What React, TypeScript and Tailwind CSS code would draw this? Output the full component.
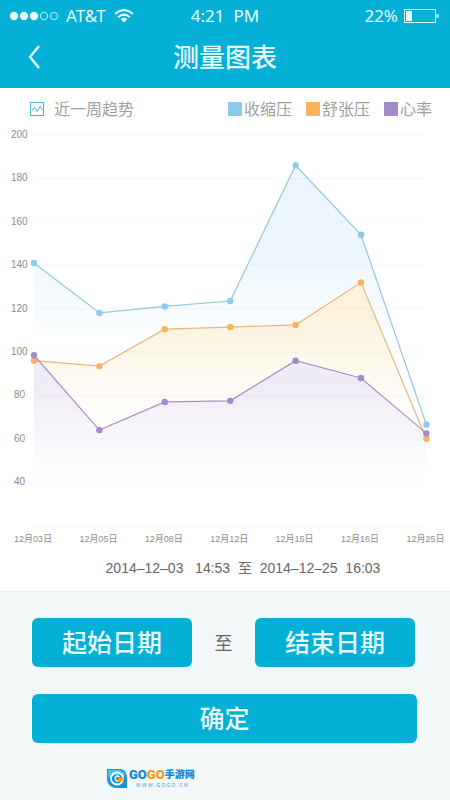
import { useState } from "react";

type Series = {
  id: string;
  label: string;
  color: string;
  line: string;
  fill: string;
  fadeFrom: number;
  fadeTo: number;
  values: number[];
};

const DATES = ["12月03日", "12月05日", "12月08日", "12月12日", "12月15日", "12月16日", "12月25日"];
const TICKS = [200, 180, 160, 140, 120, 100, 80, 60, 40];

const SERIES: Series[] = [
  {
    id: "systolic",
    label: "收缩压",
    color: "#8ccaf0",
    line: "#93c8dc",
    fill: "#ebf6fe",
    fadeFrom: 130,
    fadeTo: 225,
    values: [141, 118, 121, 123.5, 186, 154, 66.5],
  },
  {
    id: "diastolic",
    label: "舒张压",
    color: "#fbb25c",
    line: "#e3b87c",
    fill: "#fdf2de",
    fadeFrom: 200,
    fadeTo: 300,
    values: [96, 93.5, 110.5, 111.5, 112.5, 132, 60],
  },
  {
    id: "pulse",
    label: "心率",
    color: "#a38acb",
    line: "#a590c6",
    fill: "#efebf7",
    fadeFrom: 260,
    fadeTo: 358,
    values: [98.5, 64, 77, 77.5, 96, 88, 62.5],
  },
];

const BASELINE = 362;
const xAt = (i: number) => 34 + i * 65.4;
const yAt = (value: number) => 15 + (200 - value) * 2.17;

function StatusBar() {
  return (
    <div className="grid h-8 grid-cols-3 items-center px-2.5 text-[17px] text-[#e6fbff]">
      <div className="flex items-center gap-2">
        <svg className="h-3 w-12" viewBox="0 0 48 12" aria-hidden="true">
          {[4, 14, 24].map((cx) => (
            <circle key={cx} cx={cx} cy="6" r="4.2" fill="currentColor" />
          ))}
          {[34, 44].map((cx) => (
            <circle key={cx} cx={cx} cy="6" r="3.7" fill="none" stroke="currentColor" strokeWidth="0.8" />
          ))}
        </svg>
        <span>AT&amp;T</span>
        <svg className="h-3.5 w-5" viewBox="0 0 20 14" fill="none" stroke="currentColor" strokeWidth="2" aria-hidden="true">
          <path d="M1 5 Q10 -3 19 5" />
          <path d="M4 8.2 Q10 3 16 8.2" />
          <path d="M6.6 10.2 Q10 7.4 13.4 10.2 L10 13.6 Z" fill="currentColor" stroke="none" />
        </svg>
      </div>
      <span className="text-center">4:21&nbsp; PM</span>
      <div className="flex items-center justify-end gap-1.5">
        <span>22%</span>
        <svg className="h-3.5 w-9" viewBox="0 0 36 14" aria-hidden="true">
          <rect x="0.5" y="0.5" width="31" height="13" fill="none" stroke="currentColor" />
          <rect x="2" y="2" width="6" height="10" fill="currentColor" />
          <path d="M32.5 5 Q35 5 35 7 Q35 9 32.5 9 Z" fill="currentColor" />
        </svg>
      </div>
    </div>
  );
}

function TrendChart() {
  return (
    <svg
      className="block w-full font-['Liberation_Sans','Noto_Sans_CJK_SC',sans-serif]"
      viewBox="0 0 450 428"
      role="img"
      aria-label="近一周趋势"
    >
      <defs>
        {SERIES.map((s) => (
          <linearGradient
            key={s.id}
            id={s.id}
            gradientUnits="userSpaceOnUse"
            x1="0"
            x2="0"
            y1={s.fadeFrom}
            y2={s.fadeTo}
          >
            <stop offset="0" stopColor={s.fill} />
            <stop offset="1" stopColor={s.fill} stopOpacity="0" />
          </linearGradient>
        ))}
      </defs>

      {SERIES.map((s) => {
        const points = s.values.map((v, i) => `${xAt(i)},${yAt(v)}`).join(" ");
        return (
          <polygon
            key={s.id}
            points={`${xAt(0)},${BASELINE} ${points} ${xAt(6)},${BASELINE}`}
            fill={`url(#${s.id})`}
          />
        );
      })}

      {TICKS.map((tick) => (
        <g key={tick}>
          <line x1="34" x2="424" y1={yAt(tick)} y2={yAt(tick)} stroke="#000" strokeOpacity="0.03" />
          <text x={tick < 100 ? 14 : 11} y={yAt(tick) + 3} fontSize="10" fill="#8c8c8c">
            {tick}
          </text>
        </g>
      ))}
      <line x1="34" x2="424" y1="407" y2="407" stroke="#000" strokeOpacity="0.03" />

      {SERIES.map((s) => (
        <g key={s.id}>
          <polyline
            points={s.values.map((v, i) => `${xAt(i)},${yAt(v)}`).join(" ")}
            fill="none"
            stroke={s.line}
            strokeWidth="1.2"
          />
          {s.values.map((v, i) => (
            <circle key={i} cx={xAt(i)} cy={yAt(v)} r="3.2" fill={s.color} />
          ))}
        </g>
      ))}

      {DATES.map((date, i) => (
        <text key={date} x={33 + i * 65.4} y="422" fontSize="9" fill="#8c8c8c" textAnchor="middle">
          {date}
        </text>
      ))}
    </svg>
  );
}

function SiteLogo() {
  return (
    <a href="#" className="flex items-center gap-0.5">
      <svg className="size-5" viewBox="0 0 20 20" aria-hidden="true">
        <path d="M0 1 H14 Q20 3 20 10 V20 H8 Q0 18 0 10 Z" fill="#1593dc" />
        <path d="M1 2 H13 Q18 4 19 9 Q10 4 1 10 Z" fill="#4fc0f2" />
        <circle cx="10" cy="10.5" r="6" fill="none" stroke="#fff" strokeWidth="1.8" />
        <path d="M12.5 9 Q10 7 8.4 9.4 Q7.8 13 11 13" fill="none" stroke="#fff" strokeWidth="1.5" />
        <path d="M11 10 H17.5 L15 13.5 H11 Z" fill="#f6a01c" />
      </svg>
      <span className="flex flex-col">
        <span className="flex items-center font-['Roboto','Noto_Sans_CJK_SC',sans-serif] font-black">
          <span className="text-[13px] leading-4 text-[#1488d6]">GO</span>
          <span className="text-[13px] leading-4 text-[#f79a14]">GO</span>
          <span className="text-[10px] leading-4 text-[#1488d6]">手游网</span>
        </span>
        <span className="text-center text-[5px] leading-[5px] text-[#4a9fce]">W W W . G O G O . C N</span>
      </span>
    </a>
  );
}

const dateButton = "h-[49px] w-40 rounded-md bg-[#05b0d6] text-[25px] font-medium text-[#e6fbff]";

export default function App() {
  const [range] = useState({ start: "2014–12–03\u00a0\u00a0 14:53", end: "2014–12–25\u00a0 16:03" });

  return (
    <div className="flex min-h-screen flex-col bg-white font-['Noto_Sans','Noto_Sans_CJK_SC',sans-serif]">
      <header className="bg-[#05b0d6]">
        <StatusBar />
        <div className="grid h-14 grid-cols-[1fr_auto_1fr] items-center px-7 pb-1.5">
          <button type="button" aria-label="返回" className="w-4 text-[#e6fbff]">
            <svg className="h-6 w-3" viewBox="0 0 12 24" fill="none" stroke="currentColor" strokeWidth="2.4">
              <path d="M11 1 L2 12 L11 23" />
            </svg>
          </button>
          <h1 className="text-[26px] font-medium text-[#e6fbff]">测量图表</h1>
        </div>
      </header>

      <main>
        <div className="flex h-8 items-center justify-between pt-2.5 pr-[18px] pl-[30px] text-base text-[#a0a0a0]">
          <h2 className="flex items-center gap-2.5">
            <svg className="size-3.5" viewBox="0 0 14 14" fill="none" stroke="#4fb7cc" aria-hidden="true">
              <rect x="0.5" y="0.5" width="13" height="13" />
              <path d="M1.5 9 L4.5 5.5 L7 9.5 L10 4.5 L12.5 8" />
            </svg>
            近一周趋势
          </h2>
          <ul className="flex gap-3.5">
            {SERIES.map((s) => (
              <li key={s.id} className="flex items-center gap-0.5">
                <span className="size-3.5" style={{ backgroundColor: s.color }} />
                {s.label}
              </li>
            ))}
          </ul>
        </div>
        <TrendChart />
        <p className="pt-2 pb-[11px] pl-9 text-center font-['Liberation_Sans','Noto_Sans_CJK_SC',sans-serif] text-sm leading-6 text-[#666]">
          {range.start}&nbsp; 至&nbsp; {range.end}
        </p>
      </main>

      <footer className="flex grow flex-col border-t border-[#e8eeee] bg-[#f2f8f7] pt-[26px] pr-[33px] pl-8">
        <div className="flex items-center justify-between pr-0.5 text-lg text-[#666]">
          <button type="button" className={dateButton}>起始日期</button>
          至
          <button type="button" className={dateButton}>结束日期</button>
        </div>
        <button type="button" className="mt-[27px] h-[49px] rounded-md bg-[#05b0d6] text-[25px] font-medium text-[#e6fbff]">
          确定
        </button>
        <div className="mt-6 flex pl-[75px]">
          <SiteLogo />
        </div>
      </footer>
    </div>
  );
}
